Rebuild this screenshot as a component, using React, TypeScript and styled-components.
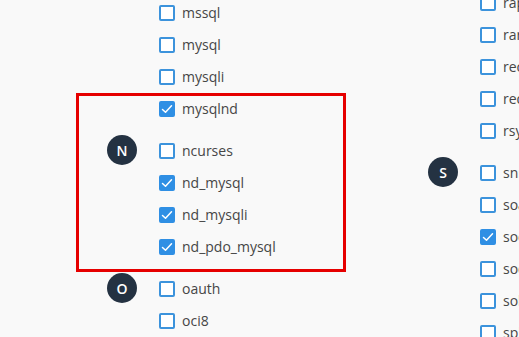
import React from "react";
import styled, { createGlobalStyle } from "styled-components";

const Global = createGlobalStyle`
  html, body {
    margin: 0;
    padding: 0;
    background: #f9f9f9;
    overflow: hidden;
    width: 519px;
    height: 337px;
  }
  body {
    font-family: "Open Sans", "Liberation Sans", sans-serif;
  }
`;

const Page = styled.div`
  position: relative;
  display: flex;
  align-items: flex-start;
  padding-left: 107px;
  width: 519px;
  height: 337px;
  box-sizing: border-box;
  overflow: hidden;
`;

const Column = styled.div<{ $offset: number }>`
  flex: 0 0 321px;
  display: flex;
  flex-direction: column;
  gap: 10px;
  margin-top: ${(p) => p.$offset}px;
`;

const Group = styled.div`
  display: flex;
  align-items: flex-start;
  gap: 22px;
`;

const Letter = styled.div<{ $hidden?: boolean }>`
  flex: 0 0 30px;
  width: 30px;
  height: 30px;
  border-radius: 50%;
  background: #243242;
  color: #ffffff;
  display: flex;
  align-items: center;
  justify-content: center;
  font-size: 14px;
  font-weight: 600;
  visibility: ${(p) => (p.$hidden ? "hidden" : "visible")};
`;

const List = styled.div`
  display: flex;
  flex-direction: column;
`;

const Row = styled.label`
  display: flex;
  align-items: center;
  gap: 7px;
  height: 32px;
  white-space: nowrap;
`;

const Box = styled.span<{ $checked: boolean }>`
  flex: 0 0 16px;
  width: 16px;
  height: 16px;
  box-sizing: border-box;
  border-radius: 2px;
  border: 2px solid ${(p) => (p.$checked ? "#2f8fe4" : "#3c93dc")};
  background: ${(p) => (p.$checked ? "#2f8fe4" : "#ffffff")};
  display: flex;
  align-items: center;
  justify-content: center;
`;

const Name = styled.span`
  font-size: 14px;
  color: #464646;
  line-height: 20px;
`;

const Highlight = styled.div`
  position: absolute;
  left: 76px;
  top: 93px;
  width: 270px;
  height: 179px;
  box-sizing: border-box;
  border: 3px solid #e60000;
  pointer-events: none;
`;

type Item = { name: string; checked?: boolean };
type G = { letter: string; hideLetter?: boolean; items: Item[] };

const Check = () => (
  <svg width="12" height="12" viewBox="0 0 12 12">
    <polyline
      points="1.5,6.5 4.5,9.3 10.5,2.8"
      fill="none"
      stroke="#ffffff"
      strokeWidth="1.5"
      strokeLinecap="round"
      strokeLinejoin="round"
    />
  </svg>
);

const GroupView = ({ g }: { g: G }) => (
  <Group>
    <Letter $hidden={g.hideLetter}>{g.letter}</Letter>
    <List>
      {g.items.map((it, i) => (
        <Row key={i}>
          <Box $checked={!!it.checked}>{it.checked && <Check />}</Box>
          <Name>{it.name}</Name>
        </Row>
      ))}
    </List>
  </Group>
);

const left: G[] = [
  {
    letter: "M",
    hideLetter: true,
    items: [
      { name: "mssql" },
      { name: "mysql" },
      { name: "mysqli" },
      { name: "mysqlnd", checked: true },
    ],
  },
  {
    letter: "N",
    items: [
      { name: "ncurses" },
      { name: "nd_mysql", checked: true },
      { name: "nd_mysqli", checked: true },
      { name: "nd_pdo_mysql", checked: true },
    ],
  },
  {
    letter: "O",
    items: [{ name: "oauth" }, { name: "oci8" }],
  },
];

const right: G[] = [
  {
    letter: "R",
    hideLetter: true,
    items: [
      { name: "raphf" },
      { name: "rar" },
      { name: "recode" },
      { name: "redis" },
      { name: "rsync" },
    ],
  },
  {
    letter: "S",
    items: [
      { name: "snmp" },
      { name: "soap" },
      { name: "sockets", checked: true },
      { name: "sodium" },
      { name: "solr" },
      { name: "spl_types" },
    ],
  },
];

export default function App() {
  return (
    <>
      <Global />
      <Page>
        <Column $offset={-3}>
          {left.map((g, i) => (
            <GroupView key={i} g={g} />
          ))}
        </Column>
        <Column $offset={-13}>
          {right.map((g, i) => (
            <GroupView key={i} g={g} />
          ))}
        </Column>
        <Highlight />
      </Page>
    </>
  );
}
